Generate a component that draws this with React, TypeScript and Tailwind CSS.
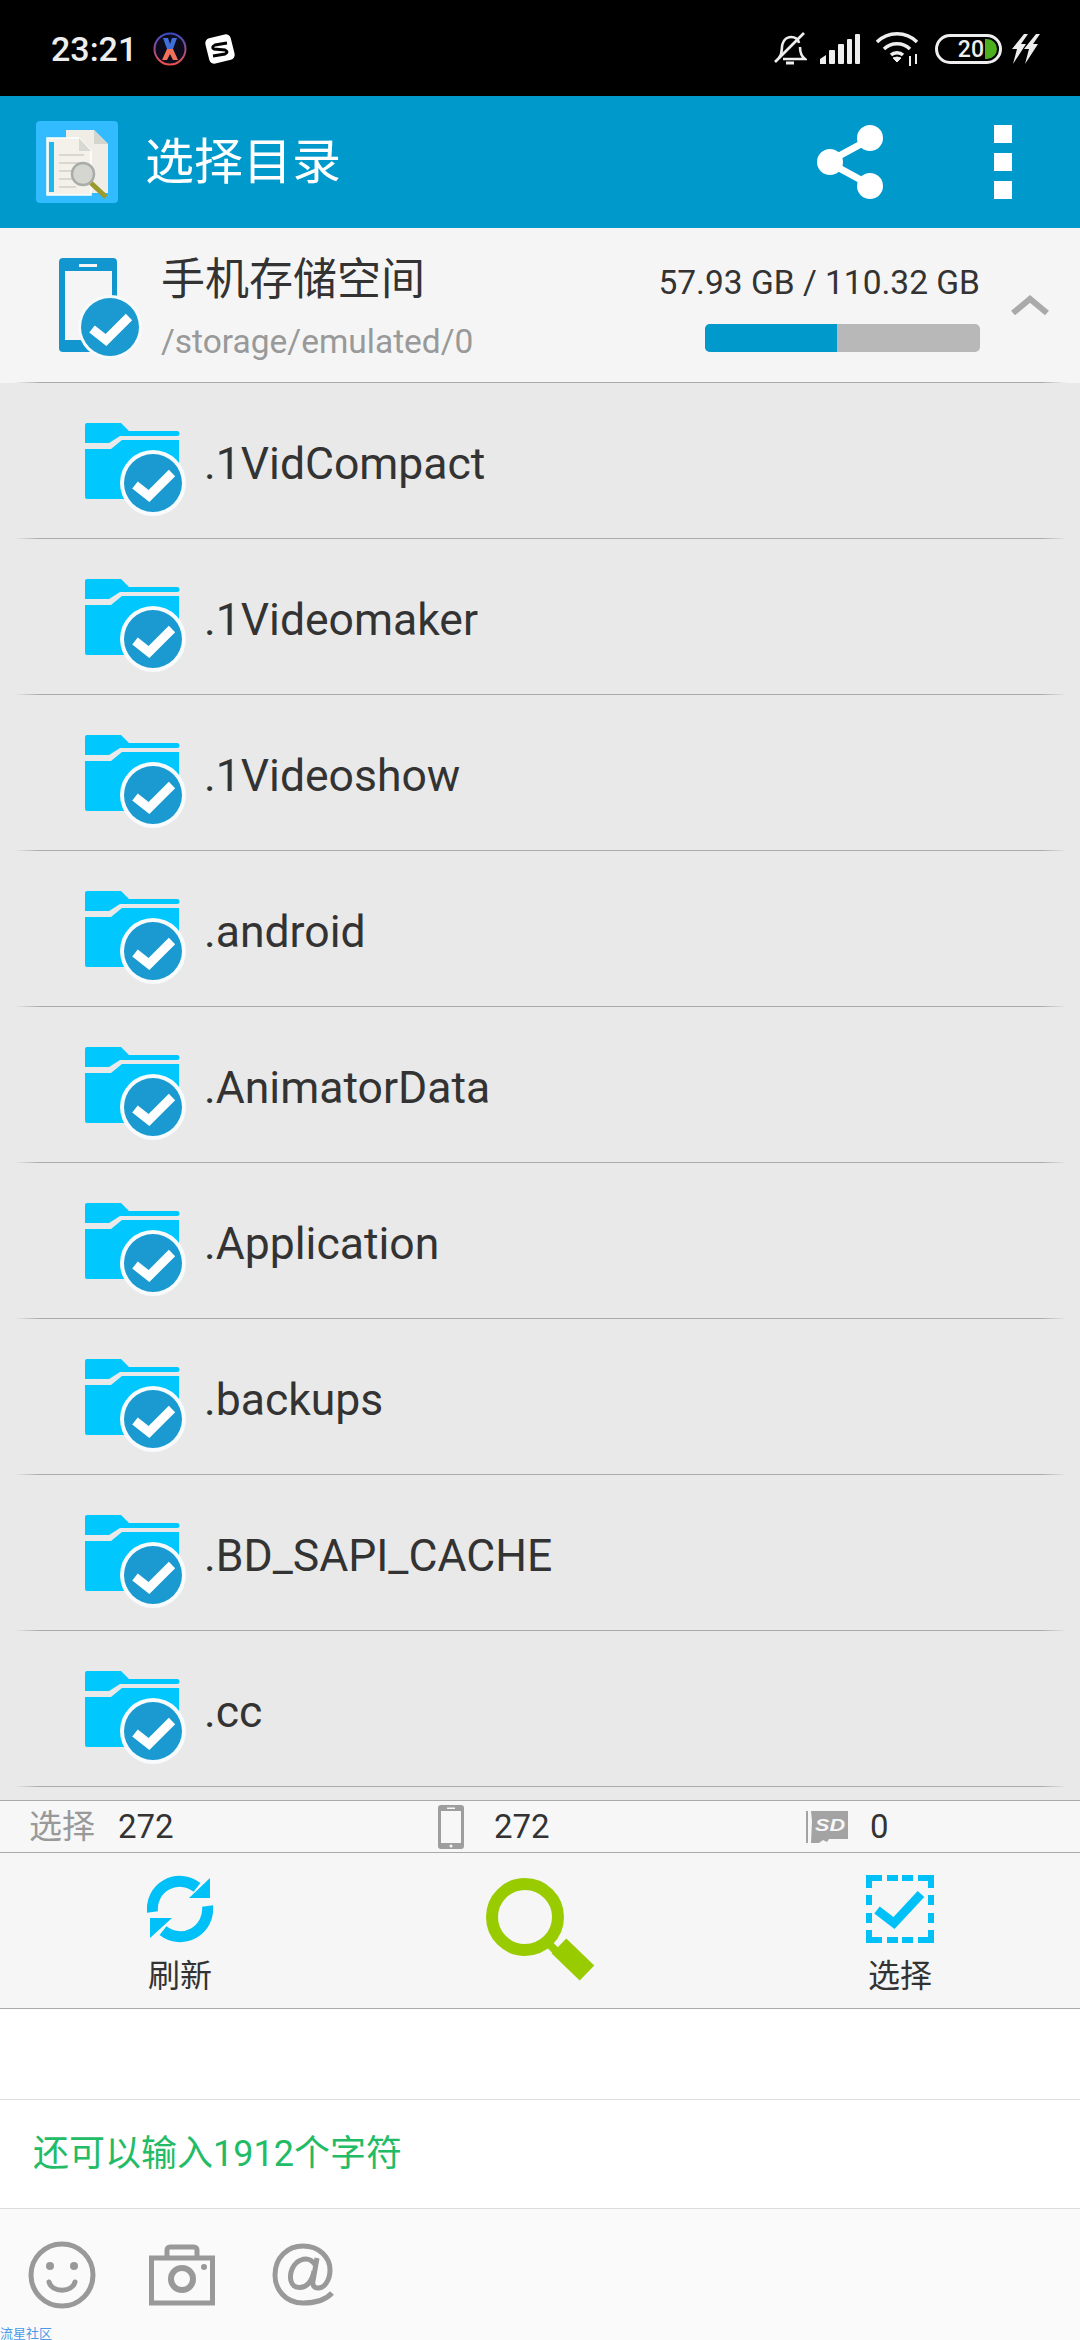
const folders = ['.1VidCompact', '.1Videomaker', '.1Videoshow', '.android', '.AnimatorData', '.Application', '.backups', '.BD_SAPI_CACHE', '.cc'];

const fontStack = "font-['Roboto','Noto_Sans_CJK_SC',sans-serif]";

function Check({ cx, cy, r, ring }: { cx: number; cy: number; r: number; ring: number }) {
  const s = r / 29;
  return (
    <g>
      <circle cx={cx} cy={cy} r={r + ring} fill="#f7fbfc" />
      <circle cx={cx} cy={cy} r={r} fill="#1a9ad0" />
      <path
        d={`M${cx - 18 * s} ${cy + 2 * s}L${cx - 4 * s} ${cy + 13 * s}L${cx + 19 * s} ${cy - 10 * s}`}
        fill="none"
        stroke="#fff"
        strokeWidth={9}
        strokeLinejoin="miter"
      />
    </g>
  );
}

function FolderIcon() {
  return (
    <svg width="104" height="96" viewBox="0 0 104 96" className="shrink-0">
      <path d="M2 0H36L44 8H92a2.5 2.5 0 0 1 0 5H35L24 20H0V2a2 2 0 0 1 2-2Z" fill="#00c8ff" />
      <path d="M0 26H26L37 17H94V74a2 2 0 0 1-2 2H2a2 2 0 0 1-2-2Z" fill="#00c8ff" />
      <Check cx={68} cy={60} r={29} ring={4} />
    </svg>
  );
}

function Divider() {
  return <div className="mr-[13px] ml-[14px] h-px shrink-0 bg-[linear-gradient(90deg,transparent,#aaa_2.5%,#aaa_97.5%,transparent)]" />;
}

function AppIcon() {
  return (
    <svg width="82" height="82" viewBox="0 0 82 82">
      <rect width="82" height="82" rx="4" fill="#33bbff" />
      <path d="M30 9H58L72 23V72H30Z" fill="#efede6" />
      <path d="M58 9V23H72Z" fill="#d5d5d0" />
      <path d="M11 17H43L55 30V74H11Z" fill="#f3f1ea" stroke="#fff" strokeWidth="1.5" />
      <path d="M43 17V30H55Z" fill="#d8d8d2" />
      <rect x="13" y="21" width="5" height="50" fill="#1cb8f0" />
      <path d="M23 34H48M23 42H48M23 50H36M23 58H36M23 66H40" stroke="#d9d7cf" strokeWidth="2" />
      <circle cx="47" cy="53" r="11" fill="#d6d6d0" stroke="#a9adaa" strokeWidth="2.5" />
      <path d="M55 62L70 76" stroke="#9a9a2e" strokeWidth="5" />
    </svg>
  );
}

function StatusIcons() {
  return (
    <div className="flex items-center">
      <svg width="34" height="36" viewBox="0 0 34 36" fill="none" stroke="#eee" strokeWidth="2.6">
        <path d="M6 27C10 22 8 18 9.5 13C11 8 15 6 18 6C22 6 25 8 26 12" />
        <path d="M27 16C27 21 28 25 32 28H10" />
        <path d="M2 31L31 2" />
        <path d="M13 32H21" strokeWidth="3" />
      </svg>
      <svg width="40" height="30" viewBox="0 0 40 30" className="ml-[13px]" fill="#eee">
        <path d="M0 30V25L6 21V30Z" />
        <rect x="9" y="16" width="6" height="14" rx="1" />
        <rect x="18" y="10" width="6" height="20" rx="1" />
        <rect x="27" y="5" width="5" height="25" rx="1" />
        <rect x="35" y="0" width="5" height="30" rx="1" />
      </svg>
      <svg width="44" height="34" viewBox="0 0 44 34" className="ml-[16px]" fill="none" stroke="#eee" strokeWidth="3.4">
        <path d="M1 10C12 -1 30 -1 41 10" />
        <path d="M8 17C15 10 27 10 34 17" />
        <path d="M15 23C18 20 24 20 27 23" />
        <path d="M21 30L17 26Q21 24 25 26Z" fill="#eee" strokeWidth="1" />
        <path d="M34 24V34M40 22V32" strokeWidth="2" />
      </svg>
      <div className="ml-[15px] flex h-[30px] w-[67px] items-center justify-end rounded-full border-[3px] border-[#eee] pr-[2px]">
        <span className="text-[23px] leading-none font-medium text-[#eee]">20</span>
        <span className="ml-[1px] h-[20px] w-[12px] rounded-r-full bg-[#4caf1e]" />
      </div>
      <svg width="28" height="30" viewBox="0 0 28 30" className="ml-[10px]" fill="#eee">
        <path d="M12 0H16L9 10H14L1 30L5 15H0Z" />
        <path d="M24 0H28L21 10H26L13 30L17 15H12Z" />
      </svg>
    </div>
  );
}

export default function App() {
  return (
    <div className={`flex h-[2340px] w-[1080px] flex-col overflow-hidden bg-white ${fontStack}`}>
      <div className="flex h-[96px] shrink-0 items-start justify-between bg-black pt-[31px] pr-[40px] pl-[51px]">
        <div className="flex items-center">
          <span className="text-[34px] leading-[36px] font-medium text-[#eee]">23:21</span>
          <svg width="34" height="34" viewBox="0 0 34 34" className="ml-[16px]">
            <defs>
              <linearGradient id="xring" x1="0" y1="0" x2="0" y2="1">
                <stop offset="0" stopColor="#3b4bc8" />
                <stop offset="1" stopColor="#f0504a" />
              </linearGradient>
            </defs>
            <circle cx="17" cy="17" r="15.5" fill="#0b0b1c" stroke="url(#xring)" strokeWidth="2" />
            <path d="M10 6H15L17 12L19 6H24L20 17H14Z" fill="#3f6fd8" />
            <path d="M14 17H20L25 28H20L17 22L14 28H9Z" fill="#f0705a" />
          </svg>
          <svg width="32" height="32" viewBox="0 0 32 32" className="ml-[17px]">
            <rect x="3" y="3" width="26" height="26" rx="5" fill="#fff" transform="rotate(-14 16 16)" />
            <path d="M23 10L11 12Q7 14 10 16L21 17Q25 19 21 21L9 23" fill="none" stroke="#000" strokeWidth="3" />
          </svg>
        </div>
        <StatusIcons />
      </div>

      <div className="flex h-[132px] shrink-0 items-center bg-[#0099cc] pr-[68px] pl-[36px]">
        <AppIcon />
        <span className="ml-[27px] text-[49px] leading-none text-white">选择目录</span>
        <svg width="68" height="76" viewBox="0 0 68 76" className="mr-[110px] ml-auto" fill="#fff">
          <path d="M56 14L12 38L56 62" fill="none" stroke="#fff" strokeWidth="7" />
          <circle cx="54" cy="14" r="13" />
          <circle cx="14" cy="38" r="13" />
          <circle cx="54" cy="62" r="13" />
        </svg>
        <div className="flex flex-col gap-[10px]">
          <span className="h-[18px] w-[18px] bg-white" />
          <span className="h-[18px] w-[18px] bg-white" />
          <span className="h-[18px] w-[18px] bg-white" />
        </div>
      </div>

      <div className="flex h-[155px] shrink-0 flex-col bg-[#f5f5f5]">
        <div className="flex flex-1">
          <svg width="94" height="104" viewBox="0 0 94 104" className="mt-[30px] ml-[59px] shrink-0">
            <rect x="0" y="0" width="58" height="94" rx="4" fill="#1296cf" />
            <rect x="6" y="13" width="47" height="69" fill="#f5f5f5" />
            <rect x="20" y="6" width="18" height="3" fill="#f5f5f5" />
            <Check cx={51} cy={69} r={29} ring={3} />
          </svg>
          <div className="ml-[8px] flex flex-col">
            <span className="mt-[27px] text-[44px] leading-[50px] text-[#333]">手机存储空间</span>
            <span className="mt-[17px] text-[33.5px] leading-[40px] text-[#999]">/storage/emulated/0</span>
          </div>
          <div className="ml-auto flex w-[340px] flex-col items-end">
            <span className="mt-[35px] text-[33.5px] leading-[40px] whitespace-nowrap text-[#333]">57.93 GB / 110.32 GB</span>
            <div className="mt-[21px] flex h-[28px] w-[275px] overflow-hidden rounded-[5px] bg-[#b8b8b8]">
              <div className="w-[132px] bg-[#0099cc]" />
            </div>
          </div>
          <svg width="38" height="20" viewBox="0 0 38 20" className="mt-[67px] mr-[31px] ml-[31px] shrink-0" fill="none" stroke="#aaa" strokeWidth="6">
            <path d="M2 18L19 4L36 18" />
          </svg>
        </div>
        <Divider />
      </div>

      <div className="flex h-[1417px] shrink-0 flex-col overflow-hidden bg-[#e9e9e9]">
        {folders.map((name) => (
          <div key={name} className="flex h-[156px] shrink-0 flex-col">
            <div className="flex flex-1 items-start pt-[40px] pl-[85px]">
              <FolderIcon />
              <span className="mt-[16px] ml-[15px] text-[44.5px] leading-[50px] text-[#333]">{name}</span>
            </div>
            <Divider />
          </div>
        ))}
      </div>

      <div className="flex h-[53px] shrink-0 items-center border-y border-[#aaa] bg-[#f7f7f7] text-[33px] text-[#333]">
        <div className="flex w-[438px] items-center pl-[29px]">
          <span className="text-[#999]">选择</span>
          <span className="ml-[23px]">272</span>
        </div>
        <div className="flex w-[367px] items-center">
          <svg width="26" height="44" viewBox="0 0 26 44">
            <rect width="26" height="44" rx="3" fill="#9e9e9e" />
            <rect x="3" y="6" width="20" height="32" fill="#f7f7f7" />
            <rect x="9" y="2.5" width="8" height="1.5" fill="#f7f7f7" />
            <circle cx="13" cy="41" r="1.5" fill="#f7f7f7" />
          </svg>
          <span className="ml-[30px]">272</span>
        </div>
        <div className="flex items-center">
          <svg width="43" height="32" viewBox="0 0 43 32">
            <path d="M3 0V32H1V0ZM6 0H43V28H24L22 31L18 29L14 32H6L7 10Z" fill="#a3a3a3" />
            <text x="10" y="20" textLength="30" lengthAdjust="spacingAndGlyphs" fontSize="16" fontStyle="italic" fontWeight="700" fill="#f7f7f7" fontFamily="Liberation Sans">SD</text>
          </svg>
          <span className="ml-[22px]">0</span>
        </div>
      </div>

      <div className="flex h-[156px] shrink-0 border-b border-[#aaa] bg-[#f6f6f6]">
        <div className="flex w-[360px] flex-col items-center pt-[22px]">
          <svg width="66" height="68" viewBox="0 0 66 68">
            <path d="M5.5 37A27.5 27.5 0 0 1 50 12.4" fill="none" stroke="#00c0f8" strokeWidth="11" />
            <path d="M63 3V23H42Z" fill="#00c0f8" />
            <path d="M60.5 31A27.5 27.5 0 0 1 16 55.6" fill="none" stroke="#00c0f8" strokeWidth="11" />
            <path d="M3 43H25L3 63Z" fill="#00c0f8" />
          </svg>
          <span className="mt-[14px] text-[32px] leading-[38px] text-[#333]">刷新</span>
        </div>
        <div className="flex flex-1 justify-center pt-[25px]">
          <svg width="110" height="108" viewBox="0 0 110 108" fill="none" stroke="#99cc00">
            <circle cx="40" cy="39" r="33" strokeWidth="12" />
            <path d="M62 64L72 74" strokeWidth="8" />
            <path d="M74 68L102 95" strokeWidth="21" />
          </svg>
        </div>
        <div className="flex w-[360px] flex-col items-center pt-[22px]">
          <svg width="68" height="68" viewBox="0 0 68 68" fill="none" stroke="#00c0f8" strokeWidth="6">
            <path d="M16 3H3V13M3 20V30M3 38V48M3 55V65H16M21 65H32M36 65H47M52 65H65V55M65 48V38M65 30V20M65 13V3H52M47 3H36M32 3H21" />
            <path d="M11 35L28 48L55 19" strokeWidth="9" />
          </svg>
          <span className="mt-[14px] text-[32px] leading-[38px] text-[#333]">选择</span>
        </div>
      </div>

      <div className="h-[91px] shrink-0 border-b border-[#ddd] bg-white" />

      <div className="flex h-[109px] shrink-0 items-center border-b border-[#ddd] bg-white pl-[33px]">
        <span className="text-[36px] leading-none text-[#22bb66]">还可以输入1912个字符</span>
      </div>

      <div className="relative flex flex-1 items-start bg-[#fafafa] pt-[32px] pl-[28px]">
        <svg width="68" height="68" viewBox="0 0 68 68" fill="none" stroke="#999" strokeWidth="5">
          <circle cx="34" cy="34" r="31" />
          <circle cx="22" cy="25" r="4" fill="#999" stroke="none" />
          <circle cx="46" cy="25" r="4" fill="#999" stroke="none" />
          <path d="M21 41C24 52 44 52 47 41" strokeLinecap="round" />
        </svg>
        <svg width="66" height="62" viewBox="0 0 66 62" className="mt-[3px] ml-[53px]" fill="none" stroke="#999" strokeWidth="5">
          <path d="M18 14V6a3 3 0 0 1 3-3H45a3 3 0 0 1 3 3V14" />
          <rect x="2.5" y="14" width="61" height="45" />
          <circle cx="33" cy="35" r="11" strokeWidth="6" />
          <circle cx="55" cy="23" r="3" fill="#999" stroke="none" />
        </svg>
        <svg width="62" height="63" viewBox="0 0 62 63" className="mt-[2px] ml-[57px]" fill="none" stroke="#999" strokeWidth="5">
          <path d="M60 50C52 59 40 60 31 60C13 60 3 46 3 32C3 14 16 3 31 3C47 3 58 14 58 27C58 38 52 45 46 45C42 45 40 42 41 38L45 15" />
          <path d="M44 23C40 16 34 15 29 17C21 20 17 30 19 38C21 46 31 46 36 41C39 38 41 34 42 28" />
        </svg>
        <span className="absolute bottom-0 left-0 text-[13px] leading-[13px] text-[#4a9ae8]">流星社区</span>
      </div>
    </div>
  );
}
